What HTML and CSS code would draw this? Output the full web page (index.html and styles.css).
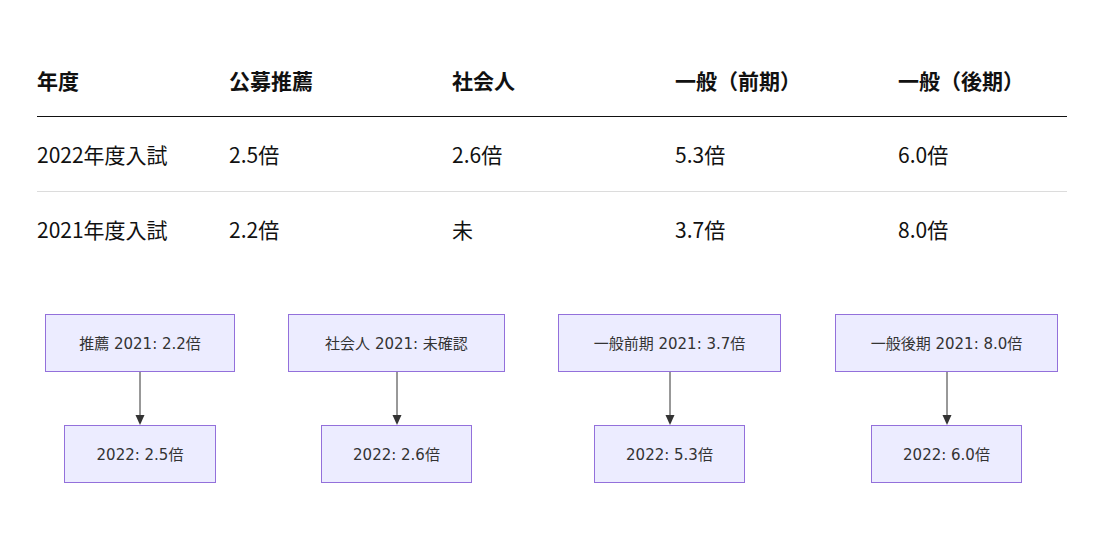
FILE: index.html
```html
<!DOCTYPE html>
<html lang="ja">
<head>
<meta charset="utf-8">
<link rel="stylesheet" href="styles.css">
</head>
<body>
<div class="page">
  <table class="ratio-table">
    <thead>
      <tr>
        <th class="c1">年度</th>
        <th class="c2">公募推薦</th>
        <th class="c3">社会人</th>
        <th class="c4">一般（前期）</th>
        <th class="c5">一般（後期）</th>
      </tr>
    </thead>
    <tbody>
      <tr>
        <td>2022年度入試</td>
        <td>2.5倍</td>
        <td>2.6倍</td>
        <td>5.3倍</td>
        <td>6.0倍</td>
      </tr>
      <tr>
        <td>2021年度入試</td>
        <td>2.2倍</td>
        <td>未</td>
        <td>3.7倍</td>
        <td>8.0倍</td>
      </tr>
    </tbody>
  </table>

  <div class="flow">
    <div class="col col-a">
      <div class="node top w190">推薦 2021: 2.2倍</div>
      <svg class="arrow" width="12" height="53" viewBox="0 0 12 53"><line x1="6" y1="0" x2="6" y2="44" stroke="#333" stroke-width="1"/><path d="M1.5 43 L10.5 43 L6 53 Z" fill="#333"/></svg>
      <div class="node bottom w152">2022: 2.5倍</div>
    </div>
    <div class="col col-b">
      <div class="node top w217">社会人 2021: 未確認</div>
      <svg class="arrow" width="12" height="53" viewBox="0 0 12 53"><line x1="6" y1="0" x2="6" y2="44" stroke="#333" stroke-width="1"/><path d="M1.5 43 L10.5 43 L6 53 Z" fill="#333"/></svg>
      <div class="node bottom w151">2022: 2.6倍</div>
    </div>
    <div class="col col-c">
      <div class="node top w223">一般前期 2021: 3.7倍</div>
      <svg class="arrow" width="12" height="53" viewBox="0 0 12 53"><line x1="6" y1="0" x2="6" y2="44" stroke="#333" stroke-width="1"/><path d="M1.5 43 L10.5 43 L6 53 Z" fill="#333"/></svg>
      <div class="node bottom w151">2022: 5.3倍</div>
    </div>
    <div class="col col-d">
      <div class="node top w223">一般後期 2021: 8.0倍</div>
      <svg class="arrow" width="12" height="53" viewBox="0 0 12 53"><line x1="6" y1="0" x2="6" y2="44" stroke="#333" stroke-width="1"/><path d="M1.5 43 L10.5 43 L6 53 Z" fill="#333"/></svg>
      <div class="node bottom w151">2022: 6.0倍</div>
    </div>
  </div>
</div>
</body>
</html>
```

FILE: styles.css
```css
html, body {
  margin: 0;
  padding: 0;
  background: #fff;
}
.page {
  padding: 43px 35px 0 37px;
}
.ratio-table {
  width: 1030px;
  border-collapse: collapse;
  table-layout: fixed;
  font-family: "Noto Sans CJK JP", "Noto Sans", sans-serif;
  font-size: 21px;
  color: #111;
}
.ratio-table th,
.ratio-table td {
  text-align: left;
  padding: 0;
  line-height: 30px;
  vertical-align: middle;
}
.ratio-table th {
  font-weight: 700;
  height: 73px;
  border-bottom: 1px solid #111;
}
.ratio-table td {
  height: 75px;
  box-sizing: border-box;
}
.ratio-table tbody tr:first-child td {
  border-bottom: 1px solid #dcdcdc;
}
.c1 { width: 192px; }
.c2, .c3, .c4 { width: 223px; }
.c5 { width: auto; }

.flow {
  display: flex;
  margin-top: 47px;
  margin-left: 8px;
  align-items: flex-start;
}
.col {
  display: flex;
  flex-direction: column;
  align-items: center;
}
.col-b, .col-c { margin-left: 53px; }
.col-d { margin-left: 54px; }
.node {
  box-sizing: border-box;
  height: 58px;
  display: flex;
  align-items: center;
  justify-content: center;
  background: #ececff;
  border: 1px solid #9370db;
  color: #333;
  font-family: "DejaVu Sans", "Noto Sans CJK JP", sans-serif;
  font-size: 15px;
  white-space: nowrap;
}
.w190 { width: 190px; }
.w217 { width: 217px; }
.w223 { width: 223px; }
.w152 { width: 152px; }
.w151 { width: 151px; }
.arrow {
  display: block;
}
```
